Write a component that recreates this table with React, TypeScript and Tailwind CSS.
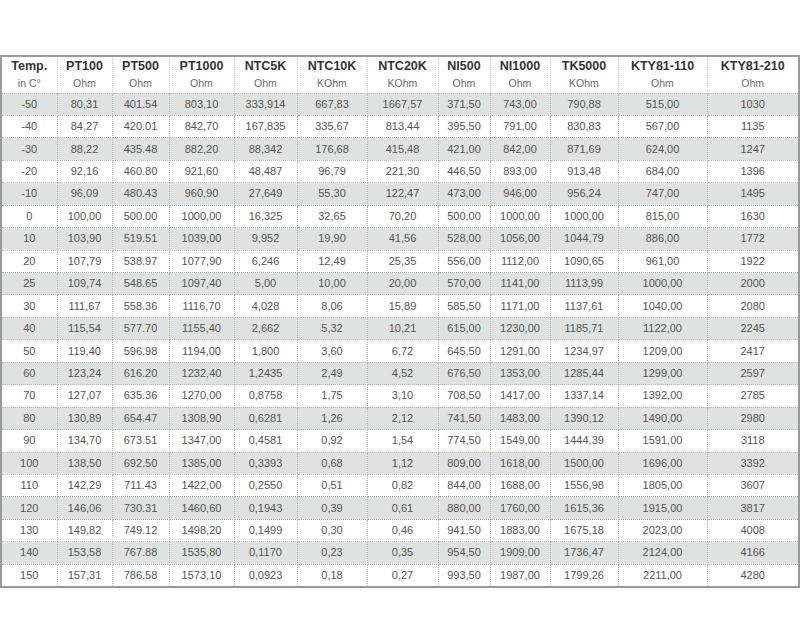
import React from "react";

const headers: [string, string][] = [
  ["Temp.", "in C°"],
  ["PT100", "Ohm"],
  ["PT500", "Ohm"],
  ["PT1000", "Ohm"],
  ["NTC5K", "Ohm"],
  ["NTC10K", "KOhm"],
  ["NTC20K", "KOhm"],
  ["NI500", "Ohm"],
  ["NI1000", "Ohm"],
  ["TK5000", "KOhm"],
  ["KTY81-110", "Ohm"],
  ["KTY81-210", "Ohm"],
];

const widths = [56, 55, 57, 65, 63, 70, 71, 52, 60, 68, 89, 92];

const rows: string[][] = [
  ["-50", "80,31", "401.54", "803,10", "333,914", "667,83", "1667,57", "371,50", "743,00", "790,88", "515,00", "1030"],
  ["-40", "84,27", "420.01", "842,70", "167,835", "335,67", "813,44", "395,50", "791,00", "830,83", "567,00", "1135"],
  ["-30", "88,22", "435.48", "882,20", "88,342", "176,68", "415,48", "421,00", "842,00", "871,69", "624,00", "1247"],
  ["-20", "92,16", "460.80", "921,60", "48,487", "96,79", "221,30", "446,50", "893,00", "913,48", "684,00", "1396"],
  ["-10", "96,09", "480.43", "960,90", "27,649", "55,30", "122,47", "473,00", "946,00", "956,24", "747,00", "1495"],
  ["0", "100,00", "500.00", "1000,00", "16,325", "32,65", "70,20", "500,00", "1000,00", "1000,00", "815,00", "1630"],
  ["10", "103,90", "519.51", "1039,00", "9,952", "19,90", "41,56", "528,00", "1056,00", "1044,79", "886,00", "1772"],
  ["20", "107,79", "538.97", "1077,90", "6,246", "12,49", "25,35", "556,00", "1112,00", "1090,65", "961,00", "1922"],
  ["25", "109,74", "548.65", "1097,40", "5,00", "10,00", "20,00", "570,00", "1141,00", "1113,99", "1000,00", "2000"],
  ["30", "111,67", "558.36", "1116,70", "4,028", "8,06", "15,89", "585,50", "1171,00", "1137,61", "1040,00", "2080"],
  ["40", "115,54", "577.70", "1155,40", "2,662", "5,32", "10,21", "615,00", "1230,00", "1185,71", "1122,00", "2245"],
  ["50", "119,40", "596.98", "1194,00", "1,800", "3,60", "6,72", "645,50", "1291,00", "1234,97", "1209,00", "2417"],
  ["60", "123,24", "616.20", "1232,40", "1,2435", "2,49", "4,52", "676,50", "1353,00", "1285,44", "1299,00", "2597"],
  ["70", "127,07", "635.36", "1270,00", "0,8758", "1,75", "3,10", "708,50", "1417,00", "1337,14", "1392,00", "2785"],
  ["80", "130,89", "654.47", "1308,90", "0,6281", "1,26", "2,12", "741,50", "1483,00", "1390,12", "1490,00", "2980"],
  ["90", "134,70", "673.51", "1347,00", "0,4581", "0,92", "1,54", "774,50", "1549,00", "1444,39", "1591,00", "3118"],
  ["100", "138,50", "692.50", "1385,00", "0,3393", "0,68", "1,12", "809,00", "1618,00", "1500,00", "1696,00", "3392"],
  ["110", "142,29", "711.43", "1422,00", "0,2550", "0,51", "0,82", "844,00", "1688,00", "1556,98", "1805,00", "3607"],
  ["120", "146,06", "730.31", "1460,60", "0,1943", "0,39", "0,61", "880,00", "1760,00", "1615,36", "1915,00", "3817"],
  ["130", "149,82", "749.12", "1498,20", "0,1499", "0,30", "0,46", "941,50", "1883,00", "1675,18", "2023,00", "4008"],
  ["140", "153,58", "767.88", "1535,80", "0,1170", "0,23", "0,35", "954,50", "1909,00", "1736,47", "2124,00", "4166"],
  ["150", "157,31", "786.58", "1573,10", "0,0923", "0,18", "0,27", "993,50", "1987,00", "1799,26", "2211,00", "4280"],
];

export default function App() {
  return (
    <div className="w-[800px] h-[640px] bg-white pt-[55px]" style={{ fontFamily: '"Liberation Sans", Arial, sans-serif' }}>
      <table className="table-fixed border-collapse w-[798px] border-2 border-solid border-[#9a9a9a]">
        <colgroup>
          {widths.map((w, i) => (
            <col key={i} style={{ width: w }} />
          ))}
        </colgroup>
        <thead>
          <tr className="h-[37px] bg-white">
            {headers.map(([t, u], i) => (
              <th
                key={i}
                className="p-0 text-center align-middle border-x border-dotted border-[#c4c4c4] font-normal"
              >
                <div className="text-[12.5px] font-bold text-[#333] leading-[15px]">{t}</div>
                <div className="text-[10.5px] text-[#6a6a6a] leading-[14px] mt-[2px]">{u}</div>
              </th>
            ))}
          </tr>
        </thead>
        <tbody>
          {rows.map((r, ri) => (
            <tr key={ri} className={ri % 2 === 0 ? "h-[22.45px] bg-[#dfe2e0]" : "h-[22.45px] bg-white"}>
              {r.map((c, ci) => (
                <td
                  key={ci}
                  className="p-0 text-center align-middle text-[11px] leading-[13px] text-[#555] border border-dotted border-[#b8b8b8]"
                >
                  {c}
                </td>
              ))}
            </tr>
          ))}
        </tbody>
      </table>
    </div>
  );
}
